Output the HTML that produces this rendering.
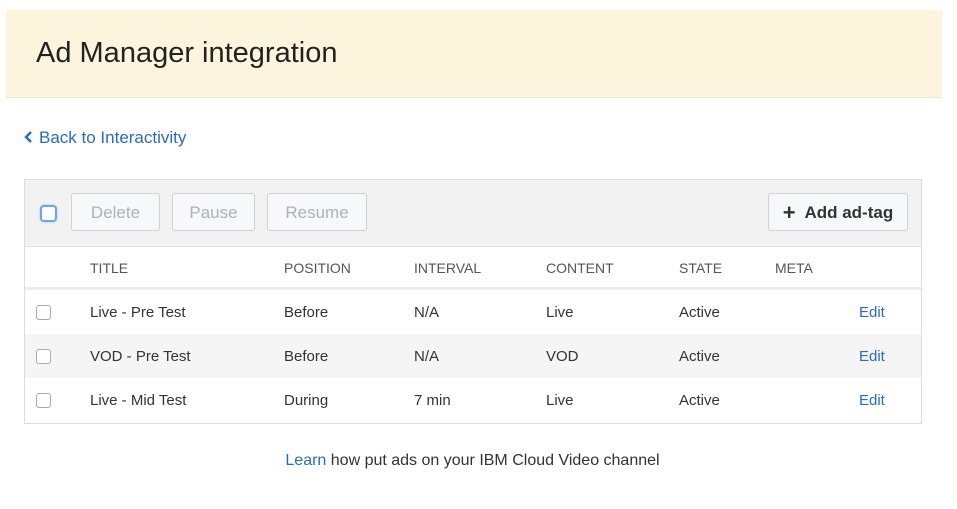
<!DOCTYPE html>
<html><head><style>
body{margin:0;width:957px;height:509px;background:#fff;font-family:"Liberation Sans",sans-serif;position:relative;overflow:hidden}
.banner{position:absolute;left:6px;top:10px;width:936px;height:87px;background:#fcf4dc;border-bottom:1px solid #ebe5d2}
.banner h1{margin:0;position:absolute;left:30px;top:27px;font-size:29px;font-weight:normal;color:#222}
.back{position:absolute;left:39px;top:128px;color:#2a6bbf;font-size:17px}
.box{position:absolute;left:24px;top:179px;width:896px;height:243px;border:1px solid #dcdcdc}
.tb{position:absolute;left:0;top:0;width:896px;height:66px;background:#f2f2f2;border-bottom:1px solid #e2e2e2}
.btn{position:absolute;top:13px;height:38px;border:1px solid #cdd3da;border-radius:3px;background:#f7f8fa;color:#a9b3bf;font-size:17px;line-height:38px;text-align:center;box-sizing:border-box}
.cb{position:absolute;width:13px;height:13px;border:1px solid #aaa;border-radius:3px;background:#fff}
.row{position:absolute;left:0;width:896px;height:44px;font-size:15px;color:#333}
.row span{position:absolute;top:14px}
.hd span{color:#555;font-size:14px;top:13px}
.edit{color:#2a6bbf}
</style></head><body>
<div class="banner"><h1>Ad Manager integration</h1></div>
<svg style="position:absolute;left:24px;top:130px" width="9" height="14" viewBox="0 0 9 14"><path d="M7 2 L2 7 L7 12" fill="none" stroke="#2a6bbf" stroke-width="2.4"/></svg>
<div class="back">Back to Interactivity</div>
<div class="box">
 <div class="tb">
  <div class="cb" style="left:15px;top:25px;border:2px solid #6aa4ea;width:13px;height:13px;border-radius:4px;box-shadow:0 0 2px #9ec4f2"></div>
  <div class="btn" style="left:46px;width:89px">Delete</div>
  <div class="btn" style="left:147px;width:83px">Pause</div>
  <div class="btn" style="left:242px;width:100px">Resume</div>
  <div class="btn" style="left:743px;width:140px;color:#333;background:#f6f8fa;font-weight:bold"><span style="font-size:22px;vertical-align:-2px">+</span>&nbsp; Add ad-tag</div>
 </div>
 <div class="row hd" style="top:67px;height:40px;border-bottom:3px solid #ececec">
  <span style="left:65px">TITLE</span><span style="left:259px">POSITION</span><span style="left:389px">INTERVAL</span><span style="left:521px">CONTENT</span><span style="left:654px">STATE</span><span style="left:750px">META</span>
 </div>
 <div class="row" style="top:110px;background:#fff">
  <div class="cb" style="left:11px;top:15px"></div>
  <span style="left:65px">Live - Pre Test</span><span style="left:259px">Before</span><span style="left:389px">N/A</span><span style="left:521px">Live</span><span style="left:654px">Active</span><span class="edit" style="left:834px">Edit</span>
 </div>
 <div class="row" style="top:154px;background:#f5f5f5">
  <div class="cb" style="left:11px;top:15px"></div>
  <span style="left:65px">VOD - Pre Test</span><span style="left:259px">Before</span><span style="left:389px">N/A</span><span style="left:521px">VOD</span><span style="left:654px">Active</span><span class="edit" style="left:834px">Edit</span>
 </div>
 <div class="row" style="top:198px;background:#fff">
  <div class="cb" style="left:11px;top:15px"></div>
  <span style="left:65px">Live - Mid Test</span><span style="left:259px">During</span><span style="left:389px">7 min</span><span style="left:521px">Live</span><span style="left:654px">Active</span><span class="edit" style="left:834px">Edit</span>
 </div>
</div>
<div style="position:absolute;left:0;width:945px;top:452px;text-align:center;font-size:16px;color:#333"><span style="color:#2a6bbf">Learn</span> how put ads on your IBM Cloud Video channel</div>
</body></html>
